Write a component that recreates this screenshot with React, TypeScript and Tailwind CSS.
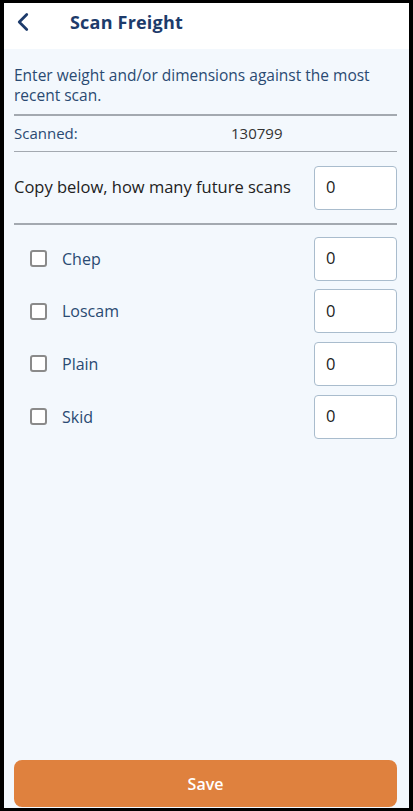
import { ChevronLeft } from 'lucide-react';

const items = ['Chep', 'Loscam', 'Plain', 'Skid'];

function NumBox() {
  return (
    <div className="w-[83px] h-[44px] bg-white border border-[#a9bccd] rounded-[4px] flex items-center px-[11px] text-[16.5px] text-[#222]">
      0
    </div>
  );
}

export default function App() {
  return (
    <div className="w-[413px] h-[811px] bg-black pt-[3px] pb-[3px] px-[4px] font-['Open_Sans',sans-serif]">
      <div className="h-full flex flex-col bg-[#f3f8fd]">
        <header className="h-[46px] bg-white flex items-center pb-[8px] shrink-0">
          <ChevronLeft className="ml-[4px] h-[30px] w-[30px] text-[#1d3b6b]" strokeWidth={2.2} />
          <h1 className="ml-[32px] text-[18px] font-bold text-[#1d3b6b] tracking-[0.2px]">Scan Freight</h1>
        </header>

        <div className="flex-1 flex flex-col pl-[10px] pr-[12px]">
          <p className="pt-[16px] text-[15.5px] leading-[20px] text-[#2a4a72]">
            Enter weight and/or dimensions against the most recent scan.
          </p>
          <div className="mt-[9px] h-[1.5px] bg-[#a3a9b0]" />
          <div className="h-[35px] flex items-center text-[15px] text-[#2a4a72]">
            <span className="w-[217px]">Scanned:</span>
            <span className="text-[#333]">130799</span>
          </div>
          <div className="h-[1.5px] bg-[#a3a9b0]" />
          <div className="h-[71px] flex items-center justify-between">
            <span className="text-[16.5px] text-[#222]">Copy below, how many future scans</span>
            <NumBox />
          </div>
          <div className="h-[1.5px] bg-[#a3a9b0]" />

          <div className="mt-[12px] flex flex-col gap-[8.7px]">
            {items.map((name) => (
              <div key={name} className="flex items-center justify-between">
                <div className="flex items-center">
                  <span className="ml-[16px] w-[17px] h-[17px] border-2 border-[#8a8a8a] rounded-[3px] bg-white" />
                  <span className="ml-[15px] text-[16px] text-[#2a4a72]">{name}</span>
                </div>
                <NumBox />
              </div>
            ))}
          </div>

          <div className="flex-1" />
          <button className="mb-px h-[47px] w-full rounded-[8px] bg-[#df813e] text-white text-[16px] font-semibold">
            Save
          </button>
        </div>
      </div>
    </div>
  );
}
